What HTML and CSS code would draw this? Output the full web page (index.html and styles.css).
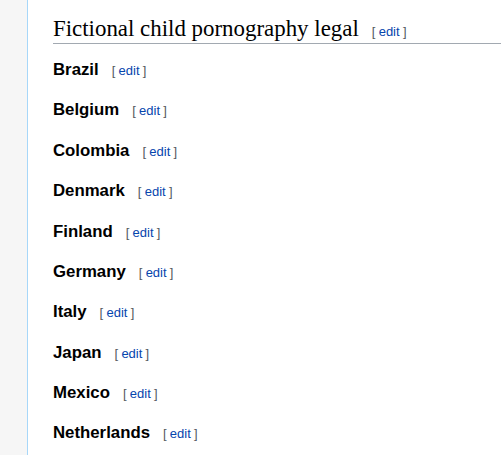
FILE: index.html
```html
<!DOCTYPE html>
<html>
<head>
<meta charset="utf-8">
<link rel="stylesheet" href="styles.css">
</head>
<body>
<div class="page">
  <div class="content">
    <h2 class="h2"><span class="title">Fictional child pornography legal</span><span class="editsection"><span class="bracket">[</span><a class="editlink" href="#">edit</a><span class="bracket">]</span></span></h2>
    <h3 class="h3"><span class="title">Brazil</span><span class="editsection"><span class="bracket">[</span><a class="editlink" href="#">edit</a><span class="bracket">]</span></span></h3>
    <h3 class="h3"><span class="title">Belgium</span><span class="editsection"><span class="bracket">[</span><a class="editlink" href="#">edit</a><span class="bracket">]</span></span></h3>
    <h3 class="h3"><span class="title">Colombia</span><span class="editsection"><span class="bracket">[</span><a class="editlink" href="#">edit</a><span class="bracket">]</span></span></h3>
    <h3 class="h3"><span class="title">Denmark</span><span class="editsection"><span class="bracket">[</span><a class="editlink" href="#">edit</a><span class="bracket">]</span></span></h3>
    <h3 class="h3"><span class="title">Finland</span><span class="editsection"><span class="bracket">[</span><a class="editlink" href="#">edit</a><span class="bracket">]</span></span></h3>
    <h3 class="h3"><span class="title">Germany</span><span class="editsection"><span class="bracket">[</span><a class="editlink" href="#">edit</a><span class="bracket">]</span></span></h3>
    <h3 class="h3"><span class="title">Italy</span><span class="editsection"><span class="bracket">[</span><a class="editlink" href="#">edit</a><span class="bracket">]</span></span></h3>
    <h3 class="h3"><span class="title">Japan</span><span class="editsection"><span class="bracket">[</span><a class="editlink" href="#">edit</a><span class="bracket">]</span></span></h3>
    <h3 class="h3"><span class="title">Mexico</span><span class="editsection"><span class="bracket">[</span><a class="editlink" href="#">edit</a><span class="bracket">]</span></span></h3>
    <h3 class="h3"><span class="title">Netherlands</span><span class="editsection"><span class="bracket">[</span><a class="editlink" href="#">edit</a><span class="bracket">]</span></span></h3>
  </div>
</div>
</body>
</html>
```
FILE: styles.css
```css
html, body {
  margin: 0;
  padding: 0;
  background: #f6f6f6;
  height: 100%;
  overflow: hidden;
}
.page {
  padding-left: 27px;
  height: 100%;
}
.content {
  background: #fff;
  border-left: 1px solid #a7d7f9;
  padding-left: 25px;
  padding-top: 14px;
  height: 100%;
  box-sizing: border-box;
  font-family: "Liberation Sans", Arial, sans-serif;
  color: #000;
}
.h2 {
  margin: 0 0 -0.4px;
  font-family: "Liberation Serif", "Times New Roman", serif;
  font-weight: normal;
  font-size: 22.9px;
  line-height: 29px;
  border-bottom: 1px solid #a2a9b1;
}
.h3 {
  margin: 5.1px 0 0;
  padding-top: 8.4px;
  font-size: 16.8px;
  font-weight: bold;
  line-height: 26.88px;
}
.editsection {
  font-family: "Liberation Sans", Arial, sans-serif;
  font-size: 13px;
  font-weight: normal;
  margin-left: 1em;
  line-height: 1;
}
.bracket {
  color: #54595d;
}
.editlink {
  color: #0645ad;
  text-decoration: none;
  margin: 0 0.25em;
}
```
